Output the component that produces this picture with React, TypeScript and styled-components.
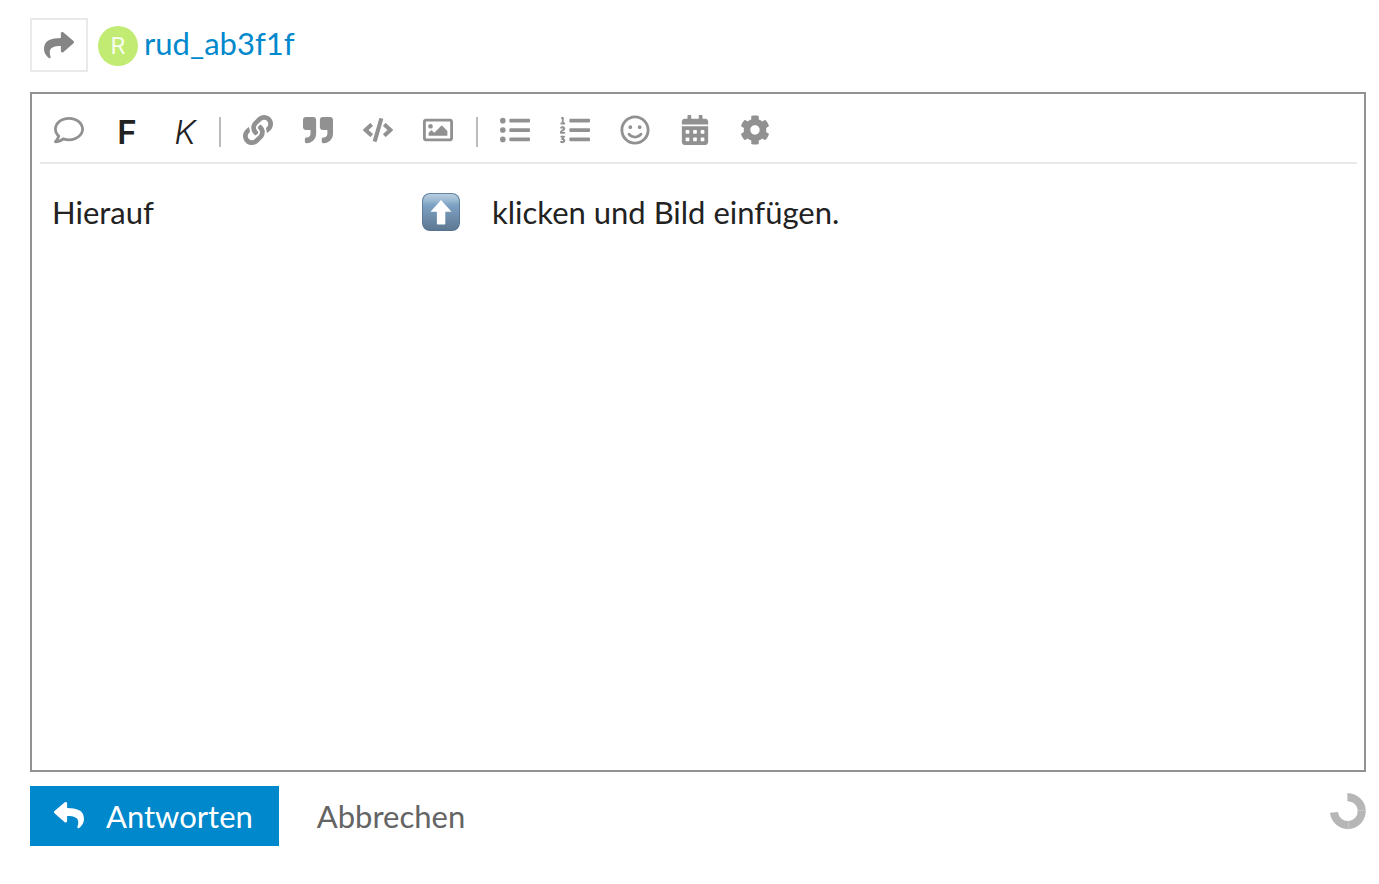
import React from 'react';
import styled, { createGlobalStyle } from 'styled-components';
import {
  FaCalendarAlt, FaCode, FaCog, FaLink, FaListOl, FaListUl, FaQuoteRight,
  FaRegComment, FaRegImage, FaRegSmile, FaReply, FaShare,
} from 'react-icons/fa';

const GlobalStyle = createGlobalStyle`
  *, *::before, *::after { box-sizing: border-box; }
  body {
    margin: 0;
    background: #fff;
    color: #222;
    font-family: Lato, 'Open Sans', sans-serif;
    font-size: 31px;
    line-height: 40px;
  }
  button { font: inherit; cursor: pointer; }
`;

const Composer = styled.form`
  display: flex;
  flex-direction: column;
  min-height: 100vh;
  padding: 18px 13px 38px 30px;
`;

const Header = styled.header`
  display: flex;
  align-items: center;
  margin-bottom: 20px;
`;

const ActionsButton = styled.button`
  display: flex;
  align-items: center;
  justify-content: center;
  width: 58px;
  height: 54px;
  margin-right: 10px;
  padding: 0;
  border: 2px solid #e9e9e9;
  background: #fff;
  color: #858585;
  font-size: 30px;
`;

const UserLink = styled.a`
  display: flex;
  align-items: center;
  gap: 6px;
  padding-top: 2px;
  color: #0088cc;
  text-decoration: none;
`;

const Avatar = styled.span`
  display: flex;
  align-items: center;
  justify-content: center;
  width: 40px;
  height: 40px;
  border-radius: 50%;
  background: #c1eb73;
  color: #f7fdec;
  font-family: Roboto, sans-serif;
  font-size: 24px;
`;

const UserName = styled.span`
  padding-bottom: 6px;
`;

const Editor = styled.section`
  display: flex;
  flex: 1;
  flex-direction: column;
  padding: 0 7px 8px 8px;
  border: 2px solid #919191;
`;

const Toolbar = styled.div`
  display: flex;
  align-items: center;
  height: 70px;
  padding-top: 4px;
  border-bottom: 2px solid #e9e9e9;
`;

const ToolGroup = styled.div`
  display: flex;
  margin-right: 3px;
`;

const ToolButton = styled.button<{ $narrow?: boolean }>`
  display: flex;
  align-items: center;
  justify-content: center;
  width: ${({ $narrow }) => ($narrow ? 58 : 60)}px;
  height: 60px;
  padding: 0;
  border: 0;
  background: transparent;
  color: #919191;
  font-size: 30px;
`;

const LetterButton = styled(ToolButton)<{ $italic?: boolean }>`
  padding-top: 4px;
  color: #222;
  font-family: Inter, sans-serif;
  font-size: 33px;
  font-style: ${({ $italic }) => ($italic ? 'italic' : 'normal')};
  font-weight: ${({ $italic }) => ($italic ? 300 : 600)};
`;

const Divider = styled.span`
  width: 2px;
  height: 30px;
  margin: 4px 7px 0 5px;
  background: #bbb;
`;

const TextArea = styled.div`
  flex: 1;
  padding: 28px 12px;
  outline: none;
`;

const Line = styled.p`
  display: flex;
  align-items: center;
  margin: 0;
`;

const Lead = styled.span`
  width: 370px;
`;

const Emoji = styled.svg`
  width: 38px;
  height: 38px;
  margin-right: 32px;
`;

const Footer = styled.footer`
  display: flex;
  align-items: center;
  margin-top: 14px;
`;

const ReplyButton = styled.button`
  display: flex;
  align-items: center;
  gap: 22px;
  height: 60px;
  padding: 0 26px 0 24px;
  border: 0;
  background: #0088cc;
  color: #fff;
`;

const ButtonIcon = styled.span`
  display: flex;
  padding-bottom: 2px;
  font-size: 30px;
`;

const CancelButton = styled.button`
  height: 60px;
  margin-left: 38px;
  padding: 0;
  border: 0;
  background: transparent;
  color: #646464;
`;

const Spinner = styled.svg`
  width: 38px;
  height: 38px;
  margin: 0 0 10px auto;
`;

const UpArrowEmoji = () => (
  <Emoji viewBox="0 0 38 38" role="img" aria-label="Pfeil nach oben">
    <defs>
      <linearGradient id="key" x1="0" y1="0" x2="0" y2="1">
        <stop offset="0" stopColor="#b9cfe0" />
        <stop offset="0.18" stopColor="#9bb9d2" />
        <stop offset="0.3" stopColor="#7ea2c4" />
        <stop offset="1" stopColor="#5d7892" />
      </linearGradient>
      <linearGradient id="rim" x1="0" y1="0" x2="0" y2="1">
        <stop offset="0" stopColor="#6584a3" />
        <stop offset="1" stopColor="#55728f" />
      </linearGradient>
    </defs>
    <rect width="38" height="38" rx="8" fill="url(#rim)" />
    <rect x="1" y="1" width="36" height="36" rx="7" fill="url(#key)" />
    <path d="M19 7 L29.5 18.8 H23.3 V30.5 Q23.3 31.5 22.3 31.5 H15.9 Q14.9 31.5 14.9 30.5 V18.8 H8.5 Z" fill="#fff" />
  </Emoji>
);

const insertTools = [
  { label: 'Link', Icon: FaLink },
  { label: 'Zitat', Icon: FaQuoteRight },
  { label: 'Code', Icon: FaCode },
  { label: 'Bild', Icon: FaRegImage },
];

const blockTools = [
  { label: 'Aufzählung', Icon: FaListUl },
  { label: 'Nummerierte Liste', Icon: FaListOl },
  { label: 'Emoji', Icon: FaRegSmile },
  { label: 'Datum', Icon: FaCalendarAlt },
  { label: 'Optionen', Icon: FaCog },
];

export default function App() {
  return (
    <>
      <GlobalStyle />
      <Composer onSubmit={(e) => e.preventDefault()}>
        <Header>
          <ActionsButton type="button" aria-label="Antwortoptionen"><FaShare /></ActionsButton>
          <UserLink href="#rud_ab3f1f">
            <Avatar>R</Avatar>
            <UserName>rud_ab3f1f</UserName>
          </UserLink>
        </Header>
        <Editor>
          <Toolbar role="toolbar" aria-label="Formatierung">
            <ToolButton type="button" $narrow aria-label="Kommentar"><FaRegComment /></ToolButton>
            <LetterButton type="button" $narrow>F</LetterButton>
            <LetterButton type="button" $narrow $italic>K</LetterButton>
            <Divider />
            <ToolGroup>
              {insertTools.map(({ label, Icon }) => (
                <ToolButton key={label} type="button" aria-label={label}><Icon /></ToolButton>
              ))}
            </ToolGroup>
            <Divider />
            <ToolGroup>
              {blockTools.map(({ label, Icon }) => (
                <ToolButton key={label} type="button" aria-label={label}><Icon /></ToolButton>
              ))}
            </ToolGroup>
          </Toolbar>
          <TextArea contentEditable suppressContentEditableWarning role="textbox" aria-multiline="true" aria-label="Beitrag" spellCheck={false}>
            <Line>
              <Lead>Hierauf</Lead>
              <UpArrowEmoji />
              <span>klicken und Bild einfügen.</span>
            </Line>
          </TextArea>
        </Editor>
        <Footer>
          <ReplyButton type="submit">
            <ButtonIcon><FaReply /></ButtonIcon>
            Antworten
          </ReplyButton>
          <CancelButton type="button">Abbrechen</CancelButton>
          <Spinner viewBox="0 0 38 38" role="img" aria-label="Wird gespeichert">
            <path d="M19.4 5.2 A13.9 13.9 0 1 1 6 20.4" fill="none" stroke="#b6b6b6" strokeWidth="8" />
            <path d="M29.5 18.5 H38 M20.6 29 V37.5" stroke="#c8c8c8" strokeWidth="1" />
          </Spinner>
        </Footer>
      </Composer>
    </>
  );
}
